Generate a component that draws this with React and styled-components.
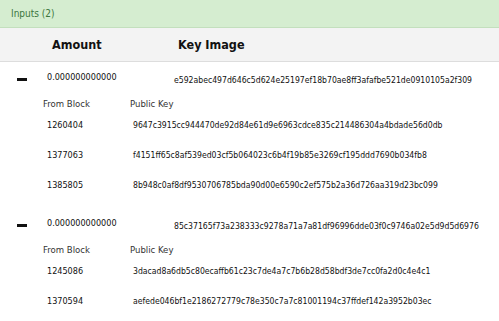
import React from 'react';
import styled, { createGlobalStyle } from 'styled-components';

const inputs = [
  {
    amount: '0.000000000000',
    keyImage: 'e592abec497d646c5d624e25197ef18b70ae8ff3afafbe521de0910105a2f309',
    outputs: [
      { block: '1260404', key: '9647c3915cc944470de92d84e61d9e6963cdce835c214486304a4bdade56d0db' },
      { block: '1377063', key: 'f4151ff65c8af539ed03cf5b064023c6b4f19b85e3269cf195ddd7690b034fb8' },
      { block: '1385805', key: '8b948c0af8df9530706785bda90d00e6590c2ef575b2a36d726aa319d23bc099' },
    ],
  },
  {
    amount: '0.000000000000',
    keyImage: '85c37165f73a238333c9278a71a7a81df96996dde03f0c9746a02e5d9d5d6976',
    outputs: [
      { block: '1245086', key: '3dacad8a6db5c80ecaffb61c23c7de4a7c7b6b28d58bdf3de7cc0fa2d0c4e4c1' },
      { block: '1370594', key: 'aefede046bf1e2186272779c78e350c7a7c81001194c37ffdef142a3952b03ec' },
    ],
  },
];

export default function App() {
  return (
    <>
      <GlobalStyle />
      <Panel>
        <PanelHeading>Inputs ({inputs.length})</PanelHeading>
        <HeadRow>
          <ToggleCell />
          <HeadCell>Amount</HeadCell>
          <HeadCell>Key Image</HeadCell>
        </HeadRow>
        {inputs.map((input, i) => (
          <Group key={i}>
            <MainRow>
              <ToggleCell>
                <Minus />
              </ToggleCell>
              <AmountCell>{input.amount}</AmountCell>
              <KeyCell>{input.keyImage}</KeyCell>
            </MainRow>
            <SubTable>
              <SubHead>
                <BlockCol>From Block</BlockCol>
                <span>Public Key</span>
              </SubHead>
              {input.outputs.map((o) => (
                <SubRow key={o.block}>
                  <BlockCol $data>{o.block}</BlockCol>
                  <HashCol>{o.key}</HashCol>
                </SubRow>
              ))}
            </SubTable>
          </Group>
        ))}
      </Panel>
    </>
  );
}

const GlobalStyle = createGlobalStyle`
  body {
    margin: 0;
    background: #fff;
    font-family: "DejaVu Sans Condensed", "DejaVu Sans", Verdana, sans-serif;
    font-stretch: condensed;
    color: #111;
  }
`;

const Panel = styled.div`
  width: 499px;
  overflow: hidden;
`;

const PanelHeading = styled.div`
  height: 27px;
  padding-left: 11px;
  display: flex;
  align-items: center;
  background: #d5edd0;
  border-bottom: 1px solid #c3dfbd;
  color: #3c763d;
  font-size: 10px;
`;

const HeadRow = styled.div`
  display: grid;
  grid-template-columns: 40px 134px 1fr;
  height: 33px;
  align-items: center;
  background: #f3f3f3;
  border-bottom: 1px solid #dddddd;
`;

const HeadCell = styled.div`
  font-size: 12.5px;
  font-weight: bold;
  color: #111;
  padding-left: 12px;
  &:last-child {
    padding-left: 4px;
  }
`;

const Group = styled.div`
  padding-bottom: 3px;
`;

const MainRow = styled.div`
  display: grid;
  grid-template-columns: 40px 134px 1fr;
  height: 29px;
  font-size: 9px;
  line-height: 14px;
`;

const ToggleCell = styled.div`
  display: flex;
  justify-content: center;
  padding-left: 4px;
  padding-top: 16px;
`;

const Minus = styled.span`
  display: block;
  width: 10px;
  height: 3px;
  background: #111;
`;

const AmountCell = styled.div`
  padding-top: 8px;
  padding-left: 7px;
`;

const KeyCell = styled.div`
  padding-top: 11px;
  font-size: 8.6px;
  white-space: nowrap;
`;

const SubTable = styled.div`
  padding-left: 43px;
  font-size: 9px;
`;

const SubHead = styled.div`
  display: flex;
  height: 24px;
  align-items: center;
  font-size: 9.5px;
  color: #333;
`;

const BlockCol = styled.span`
  width: 87px;
  flex-shrink: 0;
  padding-left: ${(p) => (p.$data ? '4px' : '0')};
  box-sizing: border-box;
`;

const SubRow = styled.div`
  display: flex;
  height: 30px;
  padding-top: 3px;
  line-height: 14px;
  box-sizing: border-box;
`;

const HashCol = styled.span`
  padding-left: 3px;
  font-size: 8.6px;
  white-space: nowrap;
`;
